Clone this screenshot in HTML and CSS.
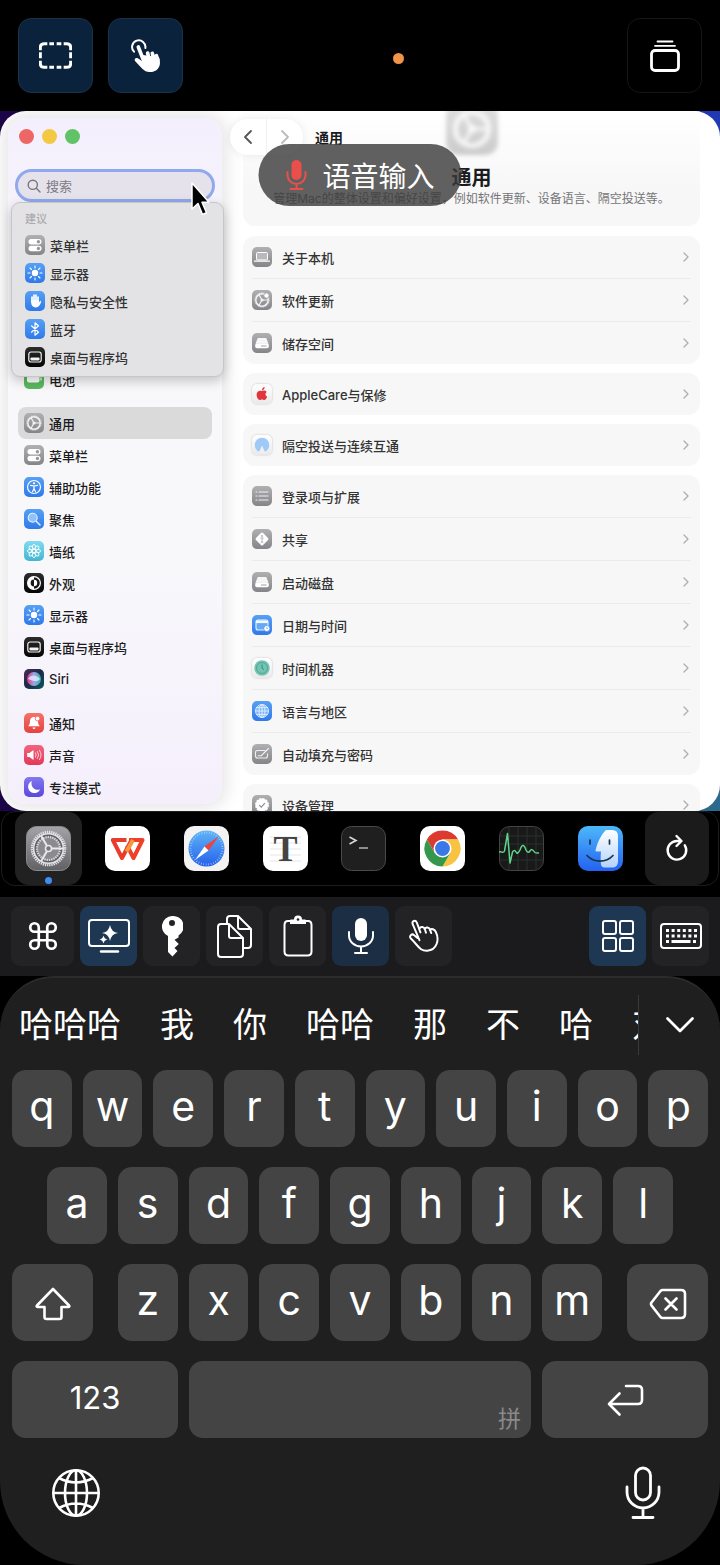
FILE: index.html
```html
<!DOCTYPE html>
<html lang="zh-CN">
<head>
<meta charset="utf-8">
<meta name="viewport" content="width=device-width, initial-scale=1">
<title>远程桌面</title>
<link rel="stylesheet" href="styles.css">
</head>
<body>
<svg class="defs" aria-hidden="true">
  <defs>
    <linearGradient id="g-gray" x2="0" y2="1"><stop stop-color="#b0b0b3"/><stop offset="1" stop-color="#858589"/></linearGradient>
    <linearGradient id="g-blue" x2="0" y2="1"><stop stop-color="#56a0f4"/><stop offset="1" stop-color="#2f7aea"/></linearGradient>
    <linearGradient id="g-cyan" x2="0" y2="1"><stop stop-color="#7fdcee"/><stop offset="1" stop-color="#46b4d2"/></linearGradient>
    <linearGradient id="g-black" x2="0" y2="1"><stop stop-color="#2c2c2c"/><stop offset="1" stop-color="#050505"/></linearGradient>
    <linearGradient id="g-white" x2="0" y2="1"><stop stop-color="#ffffff"/><stop offset="1" stop-color="#e9e9ea"/></linearGradient>
    <linearGradient id="g-red" x2="0" y2="1"><stop stop-color="#f4736b"/><stop offset="1" stop-color="#e5423f"/></linearGradient>
    <linearGradient id="g-pink" x2="0" y2="1"><stop stop-color="#f2647f"/><stop offset="1" stop-color="#e23a57"/></linearGradient>
    <linearGradient id="g-violet" x2="0" y2="1"><stop stop-color="#8378f0"/><stop offset="1" stop-color="#5a48dc"/></linearGradient>
    <linearGradient id="g-siri" x2="1" y2="1"><stop stop-color="#4b2a58"/><stop offset=".5" stop-color="#1b2a48"/><stop offset="1" stop-color="#0c5a60"/></linearGradient>
    <linearGradient id="g-orb" x2="1" y2="0"><stop stop-color="#e0357c"/><stop offset=".5" stop-color="#9fa4e8"/><stop offset="1" stop-color="#2bb5a5"/></linearGradient>
    <linearGradient id="g-metal" x2="0" y2="1"><stop stop-color="#a3a3a8"/><stop offset="1" stop-color="#606065"/></linearGradient>
    <linearGradient id="g-safari" x2="0" y2="1"><stop stop-color="#5fb5f8"/><stop offset="1" stop-color="#2461ea"/></linearGradient>
    <linearGradient id="g-finder" x2="0" y2="1"><stop stop-color="#4cb8f9"/><stop offset="1" stop-color="#2462f2"/></linearGradient>
    <linearGradient id="g-face" x2="0" y2="1"><stop stop-color="#ffffff"/><stop offset="1" stop-color="#b4d3fb"/></linearGradient>
  </defs>
  <symbol id="gear" viewBox="0 0 20 20"><rect width="20" height="20" rx="5" fill="url(#g-gray)"/><g fill="none" stroke="#f2f2f3"><circle cx="10" cy="10" r="6.2" stroke-width="1.5"/><circle cx="10" cy="10" r="7.2" stroke-width=".8" stroke-dasharray="1 .8"/><path d="M10 10H16M10 10L7 4.8M10 10L7 15.2" stroke-width="1.2"/></g><circle cx="10" cy="10" r="1.6" fill="#f2f2f3"/></symbol>
  <symbol id="switches" viewBox="0 0 20 20"><rect width="20" height="20" rx="5" fill="url(#g-gray)"/><rect x="3.5" y="4" width="13" height="5.4" rx="2.7" fill="#fff"/><rect x="3.5" y="10.8" width="13" height="5.4" rx="2.7" fill="#fff"/><circle cx="13.4" cy="6.7" r="1.7" fill="#98989c"/><circle cx="13.4" cy="13.5" r="1.7" fill="#98989c"/></symbol>
  <symbol id="sun" viewBox="0 0 20 20"><rect width="20" height="20" rx="5" fill="url(#g-blue)"/><circle cx="10" cy="10" r="3.2" fill="#fff"/><path d="M10 3v2M10 15v2M3 10h2M15 10h2M5 5l1.5 1.5M13.5 13.5L15 15M5 15l1.5-1.5M13.5 6.5L15 5" stroke="#fff" stroke-width="1.1" stroke-linecap="round"/></symbol>
  <symbol id="palm" viewBox="0 0 20 20"><rect width="20" height="20" rx="5" fill="url(#g-blue)"/><path d="M7 11V6M9 10V4.2M11 10V4.2M13 11V6" stroke="#fff" stroke-width="1.7" stroke-linecap="round"/><path d="M6.2 9h7.6v2.5l1.3-1.6q1.2-.3 1 .9c-.8 3-2.300 5.600-5.300 5.600-3 0-4.600-2-4.600-4.600z" fill="#fff"/></symbol>
  <symbol id="bluetooth" viewBox="0 0 20 20"><rect width="20" height="20" rx="5" fill="url(#g-blue)"/><path d="M6.500 6.800l7 6.400L10 16.200V3.800l3.500 3-7 6.400" fill="none" stroke="#fff" stroke-width="1.2" stroke-linejoin="round" stroke-linecap="round"/></symbol>
  <symbol id="dockicon" viewBox="0 0 20 20"><rect width="20" height="20" rx="5" fill="url(#g-black)"/><rect x="3.800" y="5" width="12.400" height="10" rx="2.200" fill="none" stroke="#f2f2f2" stroke-width="1.200"/><rect x="5.500" y="10.500" width="9" height="3" rx=".8" fill="#f2f2f2"/></symbol>
  <symbol id="battery" viewBox="0 0 20 20"><rect width="20" height="20" rx="5" fill="#5cb960"/><rect x="3" y="6.500" width="12.500" height="7" rx="2" fill="#fff"/><path d="M17 8.500v3" stroke="#fff" stroke-width="1.200"/></symbol>
  <symbol id="access" viewBox="0 0 20 20"><rect width="20" height="20" rx="5" fill="url(#g-blue)"/><circle cx="10" cy="10" r="6.500" fill="none" stroke="#fff" stroke-width="1.200"/><circle cx="10" cy="6.300" r="1.100" fill="#fff"/><path d="M6.500 8.400l3.500.6 3.500-.6M10 9v2.500l-1.500 3.300M10 11.500l1.500 3.300" fill="none" stroke="#fff" stroke-width="1.200" stroke-linecap="round"/></symbol>
  <symbol id="lens" viewBox="0 0 20 20"><rect width="20" height="20" rx="5" fill="url(#g-blue)"/><circle cx="8.700" cy="8.700" r="4.500" fill="#8fc2fa" stroke="#e2f0ff" stroke-width="1.100"/><path d="M12.200 12.200l3.800 3.800" stroke="#e2f0ff" stroke-width="1.500" stroke-linecap="round"/></symbol>
  <symbol id="flower" viewBox="0 0 20 20"><rect width="20" height="20" rx="5" fill="url(#g-cyan)"/><g fill="none" stroke="#f2fdff" stroke-width="1"><circle cx="10" cy="10" r="1.700"/><ellipse cx="10" cy="5.800" rx="1.600" ry="2.300"/><ellipse cx="10" cy="14.200" rx="1.600" ry="2.300"/><ellipse cx="5.800" cy="10" rx="2.300" ry="1.600"/><ellipse cx="14.200" cy="10" rx="2.300" ry="1.600"/><g transform="rotate(45 10 10)"><ellipse cx="10" cy="5.800" rx="1.600" ry="2.300"/><ellipse cx="10" cy="14.200" rx="1.600" ry="2.300"/><ellipse cx="5.800" cy="10" rx="2.300" ry="1.600"/><ellipse cx="14.200" cy="10" rx="2.300" ry="1.600"/></g></g></symbol>
  <symbol id="contrast" viewBox="0 0 20 20"><rect width="20" height="20" rx="5" fill="url(#g-black)"/><circle cx="10" cy="10" r="6.400" fill="none" stroke="#fff" stroke-width="1.200"/><path d="M10 3.600a6.400 6.400 0 0 0 0 12.800v-3a3.400 3.400 0 0 1 0-6.800z" fill="#fff"/><path d="M10 6.800a3.200 3.200 0 0 1 0 6.400z" fill="#fff"/></symbol>
  <symbol id="siri" viewBox="0 0 20 20"><rect width="20" height="20" rx="5" fill="url(#g-siri)"/><circle cx="10" cy="10" r="7" fill="url(#g-orb)"/><path d="M4 10c3-5 9-4 12 0-3 4-7 2-12 0z" fill="#e6e8ff" opacity=".8"/></symbol>
  <symbol id="bell" viewBox="0 0 20 20"><rect width="20" height="20" rx="5" fill="url(#g-red)"/><path d="M10 4c-3 0-4 2.300-4 4.500 0 2.500-.8 3.500-1.800 4.800h11.600C14.800 12 14 11 14 8.500 14 6 13 4 10 4z" fill="#fff"/><path d="M8.500 14.500h3q-.3 1.500-1.500 1.500t-1.500-1.500z" fill="#fff"/><circle cx="13.500" cy="5.600" r="2.300" fill="#fff" stroke="#f06a62" stroke-width=".8"/></symbol>
  <symbol id="speaker" viewBox="0 0 20 20"><rect width="20" height="20" rx="5" fill="url(#g-pink)"/><path d="M3.200 8v4h2.300l4 3V5l-4 3z" fill="#fff"/><path d="M11.500 7.800q1.500 2.200 0 4.400M13.500 6.500q2.500 3.500 0 7M15.500 5.300q3.300 4.700 0 9.400" fill="none" stroke="#fbd0d8" stroke-width="1" stroke-linecap="round"/></symbol>
  <symbol id="moon" viewBox="0 0 20 20"><rect width="20" height="20" rx="5" fill="url(#g-violet)"/><path d="M8 4a6.300 6.300 0 1 0 8.200 8.300A6.300 6.300 0 0 1 8 4z" fill="#fff"/></symbol>
  <symbol id="laptop" viewBox="0 0 20 20"><rect width="20" height="20" rx="5" fill="url(#g-gray)"/><rect x="4.500" y="5.500" width="11" height="7.500" rx="1" fill="#b9b9bc" stroke="#fff" stroke-width="1"/><path d="M2.500 14.200h15" stroke="#fff" stroke-width="1.200" stroke-linecap="round"/></symbol>
  <symbol id="update" viewBox="0 0 20 20"><use href="#gear"/><circle cx="14.500" cy="5.500" r="2.600" fill="#fff" stroke="#9a9a9d" stroke-width=".7"/></symbol>
  <symbol id="disk" viewBox="0 0 20 20"><rect width="20" height="20" rx="5" fill="url(#g-gray)"/><path d="M5.800 5h8.400l2.300 5.500h-13z" fill="#f6f6f6"/><rect x="3.200" y="10.300" width="13.600" height="5" rx="1.800" fill="#fff"/><path d="M9 13h5.500" stroke="#a0a0a3" stroke-width="1"/></symbol>
  <symbol id="apple" viewBox="0 0 20 20"><rect width="20" height="20" rx="5" fill="url(#g-white)"/><path d="M10 7.100c1-.6 3.400-1 4.700.9-1.800 1.200-1.500 3.900.5 4.700-.6 1.500-1.700 3.200-2.900 3.200-.9 0-1.300-.5-2.300-.5s-1.400.5-2.300.5c-1.500 0-3.100-2.800-3.100-5.200 0-3.600 3.200-4.600 5.400-3.600zM10 6.500c0-2 1.200-3.200 2.600-3.400.1 1.800-1 3.300-2.600 3.400z" fill="#e0353c"/></symbol>
  <symbol id="airdrop" viewBox="0 0 20 20"><rect width="20" height="20" rx="5" fill="url(#g-white)"/><circle cx="10" cy="10" r="7.300" fill="#9fcaf7"/><path d="M10 10.500l3.400 7.500H6.600z" fill="#f0f0f1"/></symbol>
  <symbol id="list" viewBox="0 0 20 20"><rect width="20" height="20" rx="5" fill="url(#g-gray)"/><path d="M7 6h9M7 10h9M7 14h9M4 6h.8M4 10h.8M4 14h.8" stroke="#f0f0f0" stroke-width="1.200" stroke-linecap="round"/></symbol>
  <symbol id="share" viewBox="0 0 20 20"><rect width="20" height="20" rx="5" fill="url(#g-gray)"/><rect x="5" y="5" width="10" height="10" rx="1.500" fill="#fff" transform="rotate(45 10 10)"/><circle cx="10" cy="7" r=".9" fill="#aaa"/><path d="M8.200 9h3.600M10 9v3l-1.200 2.200M10 12l1.200 2.200" stroke="#aaa" stroke-width=".8" fill="none"/></symbol>
  <symbol id="calendar" viewBox="0 0 20 20"><rect width="20" height="20" rx="5" fill="url(#g-blue)"/><rect x="4" y="5" width="12" height="10" rx="2" fill="#68a9f6" stroke="#e8f3ff" stroke-width="1.100"/><path d="M4 6.800h12" stroke="#f3f9ff" stroke-width="2.600"/><circle cx="14.800" cy="13.500" r="3" fill="#fff" stroke="#4088ec" stroke-width=".6"/><path d="M14.800 12v1.600h1" stroke="#4088ec" stroke-width=".6" fill="none"/></symbol>
  <symbol id="timemachine" viewBox="0 0 20 20"><rect width="20" height="20" rx="5" fill="url(#g-white)"/><circle cx="10" cy="10" r="7.700" fill="#74c4b4"/><circle cx="10" cy="10" r="5.500" fill="none" stroke="#4ca192" stroke-width=".9"/><path d="M10 6.500V10l2 1.800" fill="none" stroke="#2d8474" stroke-width=".9"/></symbol>
  <symbol id="globe-s" viewBox="0 0 20 20"><rect width="20" height="20" rx="5" fill="url(#g-blue)"/><g fill="none" stroke="#e8f3ff" stroke-width=".9"><circle cx="10" cy="10" r="6.500" fill="#79b3f8"/><ellipse cx="10" cy="10" rx="3" ry="6.500"/><path d="M3.500 10h13M10 3.500v13M4.500 6.700h11M4.500 13.300h11"/></g></symbol>
  <symbol id="pencil" viewBox="0 0 20 20"><rect width="20" height="20" rx="5" fill="url(#g-gray)"/><path d="M13 6.500H5.500a2 2 0 0 0-2 2v3.500a2 2 0 0 0 2 2h8a2 2 0 0 0 2-2V9.800M9 12l7.500-7.500M6 11.800h3" stroke="#f0f0f0" stroke-width="1.100" fill="none" stroke-linecap="round"/></symbol>
  <symbol id="badge" viewBox="0 0 20 20"><rect width="20" height="20" rx="5" fill="url(#g-gray)"/><circle cx="10" cy="10" r="6.200" fill="#fff" stroke="#fff" stroke-width="1.600" stroke-dasharray="2.400 .8"/><path d="M7.300 10.200l2 2 3.500-4" fill="none" stroke="#8d8d91" stroke-width="1.200"/></symbol>
  <symbol id="chev" viewBox="0 0 6 10"><path d="M1 1l4 4-4 4" fill="none" stroke="currentColor" stroke-width="1.300" stroke-linecap="round" stroke-linejoin="round"/></symbol>
</svg>

<header class="topbar">
  <button class="tile tile-on" aria-label="选择区域"><svg width="33" height="27" viewBox="0 0 99 81" fill="none" stroke="#fff" stroke-width="9"><path d="M4 25v-9Q4 5 16 5h9M31 5h14M53 5h14M74 5h9q12 0 12 11v9M95 31v18M95 56v9q0 11-12 11h-9M67 76H53M45 76H31M25 76h-9Q4 76 4 65v-9M4 49V31"/></svg></button>
  <button class="tile tile-on" aria-label="触控"><svg width="30" height="34" viewBox="0 0 90 102"><path d="M9 38A20 20 0 1 1 43 27" fill="none" stroke="#fff" stroke-width="6" stroke-linecap="round"/><path d="M22 24l17 44M50 42l3 14M64 43l3 14M76 50l4 12" stroke="#fff" stroke-width="11" stroke-linecap="round"/><path d="M36 48L84 55C92 76 84 99 56 99 38 99 30 84 12 66 8 58 18 54 24 60l14 10z" fill="#fff"/></svg></button>
  <span class="rec-dot"></span>
  <button class="tile tile-end" aria-label="窗口"><svg width="30" height="34" viewBox="0 0 30 34" fill="none" stroke="#fff" stroke-linecap="round"><rect x="1.500" y="11.500" width="27" height="20" rx="3.500" stroke-width="2.800"/><path d="M5 6.800h20" stroke-width="1.800"/><path d="M7.500 2.500h15" stroke-width="1.800"/></svg></button>
</header>

<main class="screen">
  <div class="window">
    <aside class="sidebar">
      <div class="lights"><button class="light red" aria-label="关闭"></button><button class="light yellow" aria-label="最小化"></button><button class="light green" aria-label="缩放"></button></div>
      <div class="search">
        <svg width="14" height="14" viewBox="0 0 14 14" fill="none" stroke="#77757e" stroke-width="1.400" stroke-linecap="round"><circle cx="5.800" cy="5.800" r="4.600"/><path d="M9.300 9.300L13 13"/></svg>
        <input type="text" placeholder="搜索" aria-label="搜索">
        <div class="suggest">
          <h2>建议</h2>
          <ul>
            <li><svg class="ico"><use href="#switches"/></svg>菜单栏</li>
            <li><svg class="ico"><use href="#sun"/></svg>显示器</li>
            <li><svg class="ico"><use href="#palm"/></svg>隐私与安全性</li>
            <li><svg class="ico"><use href="#bluetooth"/></svg>蓝牙</li>
            <li><svg class="ico"><use href="#dockicon"/></svg>桌面与程序坞</li>
          </ul>
        </div>
        <svg class="cursor" width="20" height="36" viewBox="0 0 20 36"><path d="M2 2v26l6-5.500 4.500 11 4-1.800-4.500-10.500h7z" fill="#000" stroke="#fff" stroke-width="1.500" stroke-linejoin="round"/></svg>
      </div>
      <nav class="nav">
        <ul>
          <li><a href="#"><svg class="ico"><use href="#battery"/></svg>电池</a></li>
        </ul>
        <ul>
          <li><a href="#" class="current"><svg class="ico"><use href="#gear"/></svg>通用</a></li>
          <li><a href="#"><svg class="ico"><use href="#switches"/></svg>菜单栏</a></li>
          <li><a href="#"><svg class="ico"><use href="#access"/></svg>辅助功能</a></li>
          <li><a href="#"><svg class="ico"><use href="#lens"/></svg>聚焦</a></li>
          <li><a href="#"><svg class="ico"><use href="#flower"/></svg>墙纸</a></li>
          <li><a href="#"><svg class="ico"><use href="#contrast"/></svg>外观</a></li>
          <li><a href="#"><svg class="ico"><use href="#sun"/></svg>显示器</a></li>
          <li><a href="#"><svg class="ico"><use href="#dockicon"/></svg>桌面与程序坞</a></li>
          <li><a href="#"><svg class="ico"><use href="#siri"/></svg>Siri</a></li>
        </ul>
        <ul>
          <li><a href="#"><svg class="ico"><use href="#bell"/></svg>通知</a></li>
          <li><a href="#"><svg class="ico"><use href="#speaker"/></svg>声音</a></li>
          <li><a href="#"><svg class="ico"><use href="#moon"/></svg>专注模式</a></li>
        </ul>
      </nav>
    </aside>

    <section class="content">
      <div class="intro">
        <svg class="intro-icon" viewBox="0 0 20 20"><use href="#gear"/></svg>
        <h1>通用</h1>
        <p>管理Mac的整体设置和偏好设置，例如软件更新、设备语言、隔空投送等。</p>
      </div>
      <div class="group">
        <a href="#"><svg class="ico"><use href="#laptop"/></svg><span>关于本机</span><svg class="chev"><use href="#chev"/></svg></a>
        <a href="#"><svg class="ico"><use href="#update"/></svg><span>软件更新</span><svg class="chev"><use href="#chev"/></svg></a>
        <a href="#"><svg class="ico"><use href="#disk"/></svg><span>储存空间</span><svg class="chev"><use href="#chev"/></svg></a>
      </div>
      <div class="group">
        <a href="#"><svg class="ico light-ico"><use href="#apple"/></svg><span>AppleCare与保修</span><svg class="chev"><use href="#chev"/></svg></a>
      </div>
      <div class="group">
        <a href="#"><svg class="ico light-ico"><use href="#airdrop"/></svg><span>隔空投送与连续互通</span><svg class="chev"><use href="#chev"/></svg></a>
      </div>
      <div class="group">
        <a href="#"><svg class="ico"><use href="#list"/></svg><span>登录项与扩展</span><svg class="chev"><use href="#chev"/></svg></a>
        <a href="#"><svg class="ico"><use href="#share"/></svg><span>共享</span><svg class="chev"><use href="#chev"/></svg></a>
        <a href="#"><svg class="ico"><use href="#disk"/></svg><span>启动磁盘</span><svg class="chev"><use href="#chev"/></svg></a>
        <a href="#"><svg class="ico"><use href="#calendar"/></svg><span>日期与时间</span><svg class="chev"><use href="#chev"/></svg></a>
        <a href="#"><svg class="ico light-ico"><use href="#timemachine"/></svg><span>时间机器</span><svg class="chev"><use href="#chev"/></svg></a>
        <a href="#"><svg class="ico"><use href="#globe-s"/></svg><span>语言与地区</span><svg class="chev"><use href="#chev"/></svg></a>
        <a href="#"><svg class="ico"><use href="#pencil"/></svg><span>自动填充与密码</span><svg class="chev"><use href="#chev"/></svg></a>
      </div>
      <div class="group">
        <a href="#"><svg class="ico"><use href="#badge"/></svg><span>设备管理</span><svg class="chev"><use href="#chev"/></svg></a>
      </div>
      <div class="crumbs">
        <div class="history">
          <button aria-label="后退"><svg width="10" height="16" viewBox="0 0 10 16"><path d="M8 2L2 8l6 6" fill="none" stroke="#555" stroke-width="1.800" stroke-linecap="round" stroke-linejoin="round"/></svg></button>
          <button aria-label="前进"><svg width="10" height="16" viewBox="0 0 10 16"><path d="M2 2l6 6-6 6" fill="none" stroke="#bbb" stroke-width="1.800" stroke-linecap="round" stroke-linejoin="round"/></svg></button>
        </div>
        <strong>通用</strong>
      </div>
    </section>
  </div>
  <div class="voice" role="status">
    <svg width="22" height="32" viewBox="0 0 22 32"><rect x="6" y="1" width="10" height="20" rx="5" fill="#ea4f4a"/><path d="M2 13v3a9 9 0 0 0 18 0v-3M11 25v4M5 30h12" fill="none" stroke="#ea4f4a" stroke-width="2" stroke-linecap="round"/></svg>
    <span>语音输入</span>
  </div>
</main>

<nav class="dock">
  <div class="apps">
    <button class="app running" aria-label="系统设置"><svg viewBox="0 0 45 45"><rect x=".5" y=".5" width="44" height="44" rx="10" fill="url(#g-metal)" stroke="#8b8b90"/><circle cx="22.500" cy="22.500" r="16.500" fill="none" stroke="#e4e4e6" stroke-width="2.600" stroke-dasharray="1.300 .86"/><circle cx="22.500" cy="22.500" r="14.800" fill="#5f5f64" stroke="#e4e4e6" stroke-width="1.500"/><circle cx="22.500" cy="22.500" r="11.500" fill="#8a8a8f" stroke="#d4d4d7" stroke-width="2.200" stroke-dasharray="1.500 .8"/><path d="M22.500 22.500H37M22.500 22.500L15.200 10M22.500 22.500L15.200 35" stroke="#e9e9eb" stroke-width="2"/><circle cx="22.500" cy="22.500" r="3" fill="#77777c" stroke="#e9e9eb" stroke-width="1.600"/></svg></button>
    <button class="app" aria-label="WPS Office"><svg viewBox="0 0 45 45"><rect width="45" height="45" rx="10" fill="#fff"/><path d="M24 14h13.500L28.500 32 22 19.500" fill="none" stroke="#ee4128" stroke-width="4" stroke-linejoin="round"/><path d="M21.500 14H7.800l9.200 18 9.500-18" fill="none" stroke="#ea3c2c" stroke-width="4" stroke-linejoin="round"/><path d="M28 14l-6.500 11.500" stroke="#f59a3c" stroke-width="4"/></svg></button>
    <button class="app" aria-label="Safari"><svg viewBox="0 0 45 45"><rect width="45" height="45" rx="10" fill="#f3f3f4"/><circle cx="22.500" cy="22.500" r="18" fill="url(#g-safari)"/><circle cx="22.500" cy="22.500" r="16" fill="none" stroke="#b6d6fb" stroke-width="2" stroke-dasharray=".6 1.900"/><path d="M35 10L20.500 20.500l4 4z" fill="#ef4338"/><path d="M11 34l9.500-13.500 4 4z" fill="#fff"/></svg></button>
    <button class="app" aria-label="Typora"><svg viewBox="0 0 45 45"><rect width="45" height="45" rx="10" fill="#fff"/><path d="M7 11h31M7 17h31M7 23h31M7 29h31M7 35h31" stroke="#e6e6e6"/><text x="22.500" y="35" text-anchor="middle" class="typo">T</text></svg></button>
    <button class="app" aria-label="终端"><svg viewBox="0 0 45 45"><rect x=".5" y=".5" width="44" height="44" rx="10" fill="#1f1f20" stroke="#4a4a4c"/><path d="M8.500 11l6.500 3.500L8.500 18" fill="none" stroke="#d8d8d8" stroke-width="1.600"/><path d="M18 22h9" stroke="#a8a8a8" stroke-width="1.600"/></svg></button>
    <button class="app" aria-label="Chrome"><svg viewBox="0 0 45 45"><rect width="45" height="45" rx="10" fill="#fff"/><path d="M6.900 13.500A18 18 0 0 1 38.100 13.500H22.500L14.700 27z" fill="#dc3a2e"/><path d="M38.100 13.500A18 18 0 0 1 22.500 40.500L30.300 27 22.500 13.500z" fill="#f7c340"/><path d="M22.500 40.500A18 18 0 0 1 6.900 13.500L14.700 27h15.600z" fill="#35974c"/><circle cx="22.500" cy="22.500" r="9" fill="#fff"/><circle cx="22.500" cy="22.500" r="7.400" fill="#3b78e7"/></svg></button>
    <button class="app" aria-label="活动监视器"><svg viewBox="0 0 45 45"><rect x=".5" y=".5" width="44" height="44" rx="10" fill="#19191a" stroke="#444446"/><path d="M1 10h43M1 18h43M1 34h43M10 1v43M19 1v43M28 1v43M37 1v43" stroke="#29332c"/><path d="M0 26c3-1 4 2 5.500-1L8.500 7.500 11 37l2.500-11q2-3 3.500 0t4-2c2-6 4-6 6 0q2 4 4 1 2-3 4 .5 1 2 5 1.500" fill="none" stroke="#5fd38b" stroke-width="1.500" stroke-linejoin="round"/></svg></button>
    <button class="app" aria-label="访达"><svg viewBox="0 0 45 45"><rect width="45" height="45" rx="10" fill="url(#g-finder)"/><path d="M28 4C22 10 19 18 17.500 24.500q0 1 1 1H23c-.5 5-.5 9 0 13 .3 2 1.500 3 3.500 3H34q6 0 6-6V10q0-6-6-6z" fill="url(#g-face)"/><path d="M12 14v4M31.500 14v4M9 29.500c7 7.500 19 7.500 26 0" fill="none" stroke="#17344f" stroke-width="1.700" stroke-linecap="round"/></svg></button>
  </div>
  <button class="reload" aria-label="刷新"><svg width="26" height="30" viewBox="0 0 26 30" fill="none" stroke="#fff" stroke-width="2.400" stroke-linecap="round" stroke-linejoin="round"><path d="M20.800 11.300A9.300 9.300 0 1 1 13 7h3.500M12.500 2l5 5-5 5"/></svg></button>
</nav>

<div class="tools">
  <button class="tool tool-wide" aria-label="Command"><svg width="34" height="34" viewBox="0 0 24 24" fill="none" stroke="#fff" stroke-width="1.900"><path d="M15 6v12a3 3 0 1 0 3-3H6a3 3 0 1 0 3 3V6a3 3 0 1 0-3 3h12a3 3 0 1 0-3-3"/></svg></button>
  <button class="tool tool-on" aria-label="显示"><svg width="42" height="36" viewBox="0 0 42 36"><rect x="1" y="2" width="40" height="26" rx="3" fill="none" stroke="#fff" stroke-width="2"/><path d="M13 33.500h17" stroke="#fff" stroke-width="2.400" stroke-linecap="round"/><path d="M22 7q1.500 7.500 8 8-6.500.500-8 8-1.500-7.500-8-8 6.500-.500 8-8zM15.500 17.500q.8 3.500 4 4-3.200.500-4 4-.8-3.500-4-4 3.200-.500 4-4z" fill="#fff"/></svg></button>
  <button class="tool" aria-label="密码"><svg width="22" height="42" viewBox="0 0 22 42"><path fill-rule="evenodd" d="M11 1a10.500 10.500 0 0 0-4 20v16l4.500 4.500 5-5.500-3-3 4.300-4-4.300-4.200 4-2.300V20.500A10.500 10.500 0 0 0 11 1zm0 4a3 3 0 1 1 0 6 3 3 0 0 1 0-6z" fill="#fff"/></svg></button>
  <button class="tool" aria-label="拷贝"><svg width="36" height="44" viewBox="0 0 36 44" fill="none" stroke="#fff" stroke-width="2" stroke-linejoin="round"><path d="M10 10V5q0-3 3-3h8l13 13v16q0 3-3 3h-5M21 2v11q0 2 2 2h11"/><path d="M4 10h8l14 14v16q0 3-3 3H4q-3 0-3-3V13q0-3 3-3zM12 10v12q0 2 2 2h12" fill="#232325"/></svg></button>
  <button class="tool" aria-label="粘贴"><svg width="30" height="42" viewBox="0 0 30 42"><path d="M8 6H5Q1.500 6 1.500 10v26.500q0 4 4 4h19q4 0 4-4V10q0-4-3.500-4h-3" fill="none" stroke="#fff" stroke-width="2"/><path d="M11 4.500a4 4 0 0 1 8 0h3q1 0 1 1V9H7V5.500q0-1 1-1z" fill="#fff"/><circle cx="15" cy="4.500" r="1.300" fill="#232325"/></svg></button>
  <button class="tool tool-mic" aria-label="语音"><svg width="28" height="38" viewBox="0 0 28 38"><rect x="8" y="1" width="12" height="23" rx="6" fill="#fff"/><path d="M2 15v3.500a12 11 0 0 0 24 0V15M14 30v5M8 36h12" fill="none" stroke="#fff" stroke-width="2" stroke-linecap="round"/></svg></button>
  <button class="tool" aria-label="指针"><svg width="30" height="34" viewBox="-2 -1 92 100" fill="none" stroke="#fff" stroke-width="6" stroke-linecap="round" stroke-linejoin="round"><path d="M30 62L9 12C6 2 18-1 22 8l11 30M30 27c4-9 14-7 17 2l3 10M46 28c4-8 14-6 17 3l3 9M62 31c5-6 14-3 18 5 12 24 4 56-26 58-24 1-26-14-51-38-5-8 4-16 11-9l10 8"/></svg></button>
  <button class="tool tool-on tool-end" aria-label="应用"><svg width="32" height="32" viewBox="0 0 32 32" fill="none" stroke="#fff" stroke-width="2"><rect x="1" y="1" width="13" height="13" rx="2"/><rect x="18" y="1" width="13" height="13" rx="2"/><rect x="1" y="18" width="13" height="13" rx="2"/><rect x="18" y="18" width="13" height="13" rx="2"/></svg></button>
  <button class="tool" aria-label="键盘"><svg width="42" height="26" viewBox="0 0 42 26" fill="none" stroke="#fff"><rect x="1" y="1" width="40" height="24" rx="3" stroke-width="2"/><path d="M6 7.500h31M6 13h31" stroke-width="3" stroke-dasharray="3 2.600"/><path d="M6 18.500h3M11.500 18.500h19M33 18.500h3" stroke-width="3"/></svg></button>
</div>

<section class="keyboard">
  <div class="candidates">
    <div class="words"><button>哈哈哈</button><button>我</button><button>你</button><button>哈哈</button><button>那</button><button>不</button><button>哈</button><button>对</button></div>
    <button class="expand" aria-label="展开"><svg width="30" height="18" viewBox="0 0 30 18"><path d="M2.500 2.500L15 15 27.500 2.500" fill="none" stroke="#fff" stroke-width="2.800" stroke-linecap="round" stroke-linejoin="round"/></svg></button>
  </div>
  <div class="keys">
    <div class="row"><button>q</button><button>w</button><button>e</button><button>r</button><button>t</button><button>y</button><button>u</button><button>i</button><button>o</button><button>p</button></div>
    <div class="row row-inset"><button>a</button><button>s</button><button>d</button><button>f</button><button>g</button><button>h</button><button>j</button><button>k</button><button>l</button></div>
    <div class="row row-shift">
      <button aria-label="Shift"><svg width="36" height="34" viewBox="0 0 36 34"><path d="M18 2L34 18.500q1 1.500-1 1.500h-6.500v10q0 2-2 2h-13q-2 0-2-2V20H3q-2 0-1-1.500z" fill="none" stroke="#fff" stroke-width="2.600" stroke-linejoin="round"/></svg></button>
      <div class="row letters"><button>z</button><button>x</button><button>c</button><button>v</button><button>b</button><button>n</button><button>m</button></div>
      <button aria-label="删除"><svg width="38" height="32" viewBox="0 0 38 32" fill="none" stroke="#fff" stroke-width="2.600" stroke-linejoin="round" stroke-linecap="round"><path d="M13.500 2H32q4 0 4 4v20q0 4-4 4H13.500q-1 0-2-1L2.500 17.500q-1-1.500 0-3L11.500 3q1-1 2-1zM16.500 10.500l11 11M27.500 10.500l-11 11"/></svg></button>
    </div>
    <div class="row row-space">
      <button class="num">123</button>
      <button class="space" aria-label="空格">拼</button>
      <button aria-label="换行"><svg width="38" height="34" viewBox="0 0 38 34" fill="none" stroke="#fff" stroke-width="2.600" stroke-linejoin="round" stroke-linecap="round"><path d="M20 3h12q4 0 4 4v10q0 4-4 4H3M13.500 10.500L3 21l10.500 10.500"/></svg></button>
    </div>
  </div>
  <div class="foot">
    <button aria-label="切换输入法"><svg width="50" height="50" viewBox="0 0 50 50" fill="none" stroke="#fff" stroke-width="2.600"><circle cx="25" cy="25" r="22.700"/><ellipse cx="25" cy="25" rx="11" ry="22.700"/><path d="M25 2v46M2 25h46M8 10q17 9 34 0M8 40q17-9 34 0"/></svg></button>
    <button aria-label="听写"><svg width="36" height="54" viewBox="0 0 36 54" fill="none" stroke="#fff" stroke-width="2.800" stroke-linecap="round"><rect x="10.500" y="2" width="15" height="32" rx="7.500"/><path d="M2 21v5a16 16 0 0 0 32 0v-5M18 42v9M8 51.500h20"/></svg></button>
  </div>
</section>
</body>
</html>
```
FILE: styles.css
```css
* { box-sizing: border-box; }

body {
  margin: 0;
  height: 100vh;
  display: flex;
  flex-direction: column;
  background: #000;
  color: #1c1c1e;
  font-family: Inter, "Noto Sans CJK SC", sans-serif;
  font-size: 13px;
}

button {
  margin: 0;
  padding: 0;
  border: 0;
  background: none;
  color: inherit;
  font: inherit;
  display: flex;
  align-items: center;
  justify-content: center;
}

ul { list-style: none; margin: 0; padding: 0; }
a { color: inherit; text-decoration: none; }
svg { display: block; flex: none; }
.defs { position: absolute; width: 0; height: 0; }

/* top bar */
.topbar {
  position: relative;
  flex: none;
  display: flex;
  gap: 15px;
  padding: 18px;
}
.tile {
  width: 75px;
  height: 75px;
  border: 1px solid #161617;
  border-radius: 13px;
}
.tile-on { background: #0a223c; border-color: #1b3148; }
.tile-end { margin-left: auto; }
.rec-dot {
  position: absolute;
  left: 55%;
  top: 53px;
  width: 11px;
  height: 11px;
  margin-left: -3px;
  border-radius: 50%;
  background: #ef9448;
}

/* mirrored desktop */
.screen {
  position: relative;
  flex: 1;
  min-height: 0;
  overflow: hidden;
  background: linear-gradient(90deg, #1b0546 0 50%, transparent 50%), linear-gradient(#2138b4, #2c6a8c);
}
.window {
  height: 100%;
  display: flex;
  overflow: hidden;
  border-radius: 26px;
  background: #fff;
}
.sidebar {
  flex: none;
  width: 214px;
  margin: 7px 0 7px 8px;
  border-radius: 18px;
  background: linear-gradient(#f4effd, #f8f8fa 35%, #f8f8fb 65%, #f5effc);
  box-shadow: 0 0 16px 6px rgba(0, 0, 0, .09);
}
.lights { display: flex; gap: 8px; padding: 11px 11px 25px; }
.light { width: 15px; height: 15px; border-radius: 50%; }
.red { background: #ec6765; }
.yellow { background: #f3c843; }
.green { background: #62c266; }

.search {
  position: relative;
  display: flex;
  align-items: center;
  gap: 5px;
  height: 33px;
  margin: 0 7px;
  padding: 0 9px;
  border: 3px solid #8fa9ec;
  border-radius: 17px;
  background: #e5e2ec;
}
.search input {
  min-width: 0;
  flex: 1;
  padding: 0;
  border: 0;
  outline: 0;
  background: none;
  font: inherit;
}
.search input::placeholder { color: #7d7b84; }
.suggest {
  position: absolute;
  top: 30px;
  left: -7px;
  right: -12px;
  padding: 7px 13px 5px;
  border: 1px solid #c6c6c9;
  border-radius: 9px;
  background: #e3e3e5;
  box-shadow: 0 4px 12px rgba(0, 0, 0, .22);
}
.suggest h2 {
  margin: 0 0 3px;
  color: #ababae;
  font-size: 11px;
  font-weight: 500;
  line-height: 18px;
}
.suggest li {
  display: flex;
  align-items: center;
  gap: 5px;
  height: 28px;
  font-weight: 500;
  color: #333;
}
.cursor { position: absolute; right: 2px; top: 9px; }

.ico { width: 20px; height: 20px; }
.light-ico { border-radius: 5px; box-shadow: 0 0 2px rgba(0, 0, 0, .25); }

.nav { display: flex; flex-direction: column; gap: 12px; margin-top: 161px; padding: 0 10px; }
.nav a {
  display: flex;
  align-items: center;
  gap: 5px;
  height: 32px;
  padding: 0 6px;
  border-radius: 8px;
  font-weight: 500;
}
.nav .current { background: #dadadb; }

.content {
  position: relative;
  flex: 1;
  min-width: 0;
  display: flex;
  flex-direction: column;
  gap: 9px;
  padding: 0 20px 0 21px;
}
.intro {
  flex: none;
  display: flex;
  flex-direction: column;
  align-items: center;
  padding-bottom: 18px;
  margin-bottom: 1px;
  border-radius: 0 0 12px 12px;
  background: linear-gradient(#fff, #f7f7f7 70%);
  text-align: center;
}
.intro-icon { width: 52px; height: 52px; margin: -8px 0 11px; opacity: .4; filter: blur(2px); }
.intro h1 { margin: 0; font-size: 20px; line-height: 24px; font-weight: 700; }
.intro p { margin: 0; color: #757577; font-size: 12px; line-height: 18px; white-space: nowrap; }

.group { flex: none; border-radius: 12px; background: #f7f7f7; padding: 0 9px; }
.group a { display: flex; align-items: center; gap: 10px; height: 42px; padding-right: 2px; font-weight: 500; color: #333; }
.group a + a { height: 43px; border-top: 1px solid #ebebec; }
.group span { flex: 1; }
.group .chev { width: 6px; height: 10px; color: #aeaeb0; }

.crumbs {
  position: absolute;
  top: 8px;
  left: 8px;
  display: flex;
  align-items: center;
  gap: 12px;
  font-size: 14px;
}
.history {
  display: flex;
  width: 73px;
  height: 36px;
  border-radius: 18px;
  background: #fff;
  box-shadow: 0 0 10px rgba(0, 0, 0, .08);
}
.history button { flex: 1; }
.history button + button { border-left: 1px solid #f0f0f0; }

.voice {
  position: absolute;
  top: 33px;
  left: 50%;
  transform: translateX(-50%);
  display: flex;
  align-items: center;
  gap: 15px;
  height: 62px;
  padding: 0 27px;
  border-radius: 31px;
  background: rgba(57, 57, 57, .8);
  color: #fff;
  font-size: 28px;
  white-space: nowrap;
}

/* dock */
.dock {
  flex: none;
  display: flex;
  gap: 11px;
  height: 75px;
  margin: 0 1px 11px;
  padding: 0 9px 0 13px;
  border: 1px solid #1c1c1d;
  border-radius: 14px;
}
.apps { flex: 1; display: flex; justify-content: space-between; }
.app { position: relative; width: 67px; border-radius: 14px; }
.app svg { width: 45px; height: 45px; }
.running { background: #212122; }
.running::after {
  content: "";
  position: absolute;
  bottom: 1px;
  width: 7px;
  height: 7px;
  border-radius: 50%;
  background: #3f8cf4;
}
.typo { font: 700 36px "Liberation Serif", serif; fill: #444; }
.reload { width: 64px; border-radius: 14px; background: #1b1b1b; }

/* tool strip */
.tools {
  flex: none;
  display: flex;
  gap: 6px;
  padding: 9px 11px 10px;
  background: #1b1b1d;
}
.tool { width: 57px; height: 60px; border-radius: 9px; background: #232325; }
.tool-wide { width: 63px; }
.tool-on { background: #1e3752; }
.tool-mic { background: #1c2e44; }
.tool-end { margin-left: auto; }

/* keyboard */
.keyboard {
  flex: none;
  border-top: 2px solid #2b2b2b;
  border-radius: 54px 54px 84px 84px;
  background: #1f1f1f;
  color: #fff;
}
.candidates { display: flex; align-items: center; height: 92px; padding: 17px 0 15px 19px; }
.words {
  flex: 1;
  min-width: 0;
  display: flex;
  gap: 39px;
  height: 60px;
  overflow: hidden;
  border-right: 1px solid #3a3a3a;
}
.words button { flex: none; font-size: 34px; line-height: 60px; }
.expand { width: 81px; height: 60px; }
.keys { display: flex; flex-direction: column; gap: 20px; padding: 0 12px; }
.row { display: flex; gap: 11px; }
.row button {
  flex: 1;
  min-width: 0;
  height: 77px;
  padding-bottom: 6px;
  border-radius: 14px;
  background: #444;
  font-size: 41px;
}
.row-inset { padding: 0 35px; }
.row-shift { gap: 25px; }
.row-shift > button { flex: 0 0 81px; padding: 2px 0 0; }
.letters { flex: 1; }
.row-space button { flex: 0 0 166px; padding: 0; }
.row-space .num { padding-bottom: 4px; font-size: 31px; }
.row-space .space {
  flex: 1;
  align-items: flex-end;
  justify-content: flex-end;
  padding: 0 10px 4px;
  color: #8a8a8a;
  font-size: 23px;
  line-height: 30px;
}
.foot {
  display: flex;
  justify-content: space-between;
  align-items: center;
  height: 127px;
  padding: 0 59px 18px 51px;
}
```
